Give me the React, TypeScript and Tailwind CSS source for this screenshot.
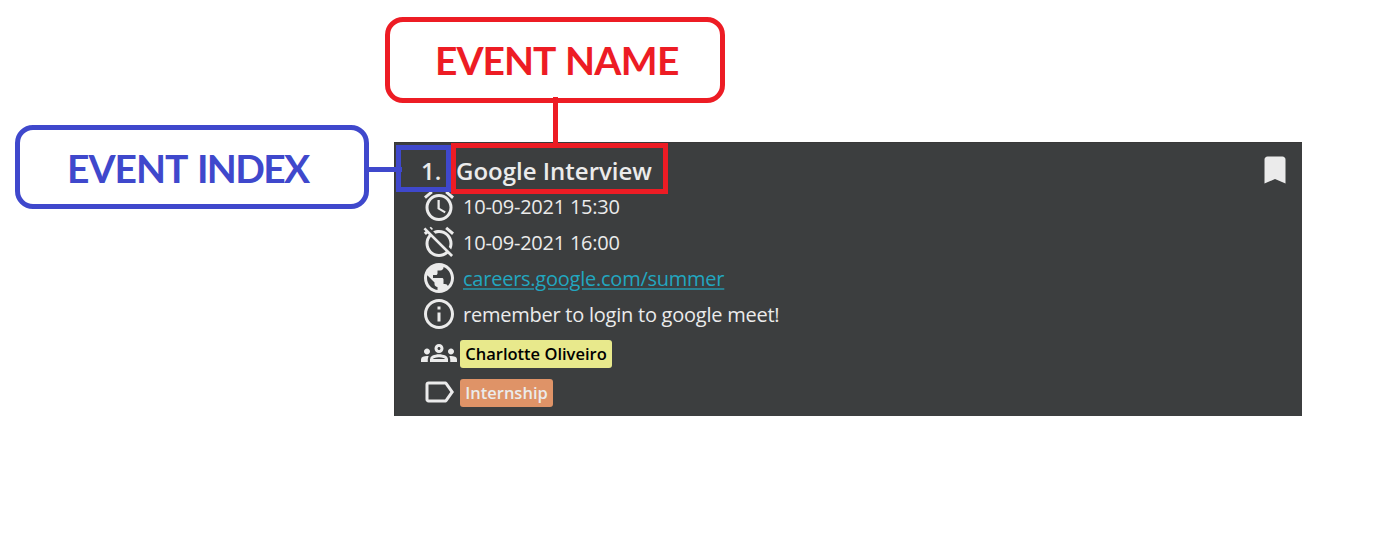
import React from "react";
import {
  MdAlarm,
  MdAlarmOff,
  MdPublic,
  MdInfoOutline,
  MdOutlineGroups,
  MdLabelOutline,
  MdBookmark,
} from "react-icons/md";

function DetailRow({ icon, children }: { icon: React.ReactNode; children: React.ReactNode }) {
  return (
    <div className="flex h-9 items-center gap-[6px]">
      {icon}
      <span className="whitespace-nowrap pt-[2px] text-[20px] leading-9 tracking-[-0.24px]">{children}</span>
    </div>
  );
}

function EventCard() {
  return (
    <article className="h-[274px] w-[908px] border-l border-t border-[#383838] bg-[#3c3e3f] pl-[26px] pr-[9px] text-[#ebebeb]">
      <header className="flex h-[45px] items-start justify-between pt-[9px]">
        <h1 className="flex whitespace-nowrap pt-px text-[24px] font-semibold leading-9">
          <span className="w-[35px]">1.</span>
          <span>Google Interview</span>
        </h1>
        <MdBookmark size={36} />
      </header>
      <DetailRow icon={<MdAlarm size={36} />}>10-09-2021 15:30</DetailRow>
      <DetailRow icon={<MdAlarmOff size={36} />}>10-09-2021 16:00</DetailRow>
      <DetailRow icon={<MdPublic size={36} />}>
        <a className="text-[#22a7c0] underline decoration-[#2b8090] decoration-2 underline-offset-2">
          careers.google.com/summer
        </a>
      </DetailRow>
      <DetailRow icon={<MdInfoOutline size={36} />}>remember to login to google meet!</DetailRow>
      <div className="mt-[3px] flex h-9 items-center gap-[3px]">
        <MdOutlineGroups size={36} />
        <span className="mt-[2px] flex h-7 w-[152px] items-center justify-center whitespace-nowrap rounded-[3px] bg-[#e8e98c] text-[16.5px] font-semibold text-black">
          Charlotte Oliveiro
        </span>
      </div>
      <div className="mt-[3px] flex h-9 items-center gap-[3px]">
        <MdLabelOutline size={36} />
        <span className="mt-[2px] flex h-7 w-[93px] items-center justify-center whitespace-nowrap rounded-[3px] bg-[#df9367] text-[16.5px] font-semibold">
          Internship
        </span>
      </div>
    </article>
  );
}

export default function App() {
  return (
    <main className="relative h-[538px] w-[1388px] overflow-hidden bg-white pl-[394px] pt-[142px] font-['Open_Sans','Noto_Sans',sans-serif]">
      <EventCard />
      <div className="absolute left-[15px] top-[125px] flex h-[84px] w-[354px] items-center whitespace-nowrap rounded-[18px] border-[5px] border-[#3f48cc] pl-[47px] pt-[2px] font-['Lato',sans-serif] text-[39px] font-bold text-[#3f48cc]">
        <span className="w-[130px] tracking-[-1px]">EVENT </span>
        <span className="tracking-[-1.7px]">INDEX</span>
      </div>
      <div className="absolute left-[364px] top-[167px] h-[5px] w-[38px] bg-[#3f48cc]" />
      <div className="absolute left-[396px] top-[145px] h-[47px] w-[55px] border-[5px] border-[#3f48cc]" />
      <div className="absolute left-[385px] top-[17px] flex h-[86px] w-[340px] items-center whitespace-nowrap rounded-[18px] border-[5px] border-[#ed1c24] pl-[45px] font-['Lato',sans-serif] text-[39px] font-bold text-[#ed1c24]">
        <span className="w-[130px] tracking-[-1px]">EVENT </span>
        <span className="tracking-[-0.7px]">NAME</span>
      </div>
      <div className="absolute left-[553px] top-[97px] h-[48px] w-[5px] bg-[#ed1c24]" />
      <div className="absolute left-[451px] top-[143px] h-[51px] w-[217px] border-[5px] border-[#ed1c24]" />
    </main>
  );
}
